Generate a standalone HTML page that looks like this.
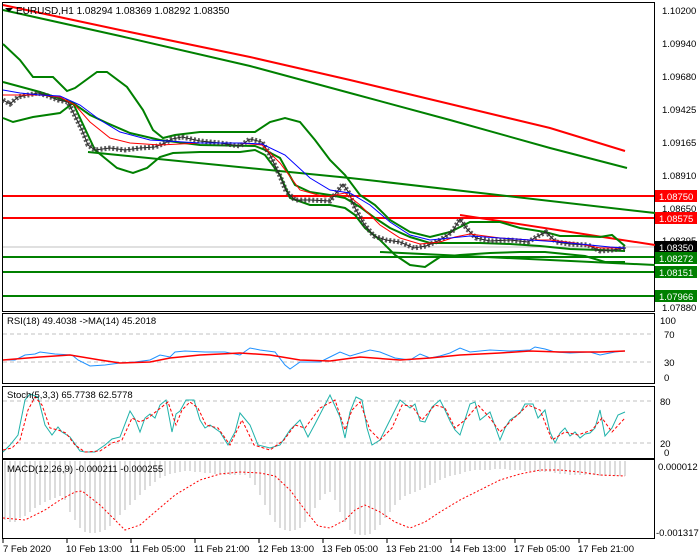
<!DOCTYPE html>
<html><head><meta charset="utf-8"><style>
html,body{margin:0;padding:0;background:#fff;}
svg{display:block;font-family:"Liberation Sans",sans-serif;}
</style></head><body>
<svg width="700" height="560" viewBox="0 0 700 560" xmlns="http://www.w3.org/2000/svg">
<rect width="700" height="560" fill="#fff"/>
<!-- main panel -->
<rect x="2.5" y="2.5" width="652" height="309" fill="none" stroke="#000"/>
<line x1="3" y1="247" x2="654" y2="247" stroke="#c0c0c0"/>
<!-- long MAs -->
<polyline points="3,5 120,30 250,57 350,80 450,104 550,128 625,151" fill="none" stroke="#f00" stroke-width="2"/>
<polyline points="3,10 120,36 250,66 350,93 450,120 550,148 627,168" fill="none" stroke="#008000" stroke-width="2"/>
<!-- horizontal levels -->
<line x1="3" y1="196" x2="654" y2="196" stroke="#f00" stroke-width="2"/>
<line x1="3" y1="218" x2="654" y2="218" stroke="#f00" stroke-width="2"/>
<line x1="3" y1="257" x2="654" y2="257" stroke="#008000" stroke-width="2"/>
<line x1="3" y1="272" x2="654" y2="272" stroke="#008000" stroke-width="2"/>
<line x1="3" y1="296" x2="654" y2="296" stroke="#008000" stroke-width="2"/>
<!-- trendlines -->
<polyline points="460,215 655,245" fill="none" stroke="#f00" stroke-width="2"/>
<polyline points="88,152 350,178 655,213" fill="none" stroke="#008000" stroke-width="2"/>
<polyline points="380,252 655,265" fill="none" stroke="#008000" stroke-width="2"/>
<!-- bollinger -->
<polyline points="3,44 20,60 33,77 53,77 67,91 75,88 97,72 107,72 127,87 143,110 153,130 163,138 175,135 200,132 255,132 270,122 285,118 300,122 315,140 330,160 345,175 360,195 375,205 390,220 410,232 430,237 450,232 470,222 500,222 520,228 545,232 560,236 580,236 600,237 612,235 625,246" fill="none" stroke="#008000" stroke-width="2"/>
<polyline points="3,118 13,122 33,117 60,113 73,103 87,133 95,150 117,168 133,173 147,168 160,157 173,153 200,152 240,152 255,150 265,155 280,175 290,198 310,205 330,205 345,208 355,215 365,228 380,240 395,255 410,265 425,267 440,257 460,255 490,253 520,252 545,252 565,254 585,256 605,262 625,262" fill="none" stroke="#008000" stroke-width="2"/>
<polyline points="3,82 40,92 73,103 90,115 107,123 130,133 160,140 200,145 255,146 265,150 280,158 295,185 310,192 330,195 345,198 360,207 375,218 390,228 410,237 430,243 450,243 480,243 510,244 540,246 570,249 600,250 625,251" fill="none" stroke="#008000" stroke-width="2"/>
<!-- price -->
<polyline points="3,100 10,104 18,97 28,95 38,93 48,96 58,100 68,102 75,116 82,130 88,145 95,150 110,148 125,150 140,148 155,147 165,143 172,139 182,137 200,141 220,143 240,146 250,139 262,142 270,155 280,176 286,191 295,200 310,200 330,201 343,184 349,193 355,208 364,224 374,236 386,240 400,242 414,248 426,246 440,240 452,232 460,219 467,229 476,238 490,241 510,240 528,242 538,236 546,232 556,242 570,244 588,245 600,251 612,250 626,248" fill="none" stroke="#222" stroke-width="1"/>
<polyline points="3,100 10,104 18,97 28,95 38,93 48,96 58,100 68,102 75,116 82,130 88,145 95,150 110,148 125,150 140,148 155,147 165,143 172,139 182,137 200,141 220,143 240,146 250,139 262,142 270,155 280,176 286,191 295,200 310,200 330,201 343,184 349,193 355,208 364,224 374,236 386,240 400,242 414,248 426,246 440,240 452,232 460,219 467,229 476,238 490,241 510,240 528,242 538,236 546,232 556,242 570,244 588,245 600,251 612,250 626,248" fill="none" stroke="#333" stroke-width="5" stroke-dasharray="2,2" opacity="0.8"/>
<polyline points="3,95 20,95 40,95 60,97 75,105 90,122 110,138 130,143 160,145 200,143 240,143 262,145 280,163 300,190 325,197 345,193 360,205 380,225 400,238 420,244 440,242 455,237 470,234 500,238 530,240 550,240 575,243 600,248 625,248" fill="none" stroke="#f00" stroke-width="1"/>
<polyline points="3,90 20,93 40,95 60,96 80,105 100,120 120,132 150,140 200,143 240,143 262,144 285,155 310,178 330,190 350,193 370,205 390,222 410,235 430,240 450,238 470,236 500,238 530,240 560,242 590,245 610,247 625,248" fill="none" stroke="#00f" stroke-width="1"/>
<text x="16" y="14" font-size="10" fill="#000">EURUSD,H1  1.08294 1.08369 1.08292 1.08350</text>
<polygon points="5,8 13,8 9,12" fill="#000"/>
<!-- right axis main -->
<g font-size="9.5" fill="#000">
<text x="662" y="14">1.10200</text>
<text x="662" y="47">1.09940</text>
<text x="662" y="80">1.09680</text>
<text x="662" y="113">1.09425</text>
<text x="662" y="146">1.09165</text>
<text x="662" y="179">1.08910</text>
<text x="662" y="212">1.08650</text>
<text x="662" y="244">1.08395</text>
<text x="662" y="311">1.07880</text>
</g>
<rect x="655" y="190" width="42" height="12" fill="#f00"/><text x="659" y="200" font-size="9.5" fill="#fff">1.08750</text>
<rect x="655" y="212" width="42" height="12" fill="#f00"/><text x="659" y="222" font-size="9.5" fill="#fff">1.08575</text>
<rect x="655" y="241" width="42" height="12" fill="#000"/><text x="659" y="251" font-size="9.5" fill="#fff">1.08350</text>
<rect x="655" y="252" width="42" height="12" fill="#008000"/><text x="659" y="262" font-size="9.5" fill="#fff">1.08272</text>
<rect x="655" y="266" width="42" height="12" fill="#008000"/><text x="659" y="276" font-size="9.5" fill="#fff">1.08151</text>
<rect x="655" y="290" width="42" height="12" fill="#008000"/><text x="659" y="300" font-size="9.5" fill="#fff">1.07966</text>
<!-- RSI -->
<rect x="2.5" y="313.5" width="652" height="70" fill="none" stroke="#000"/>
<line x1="3" y1="334" x2="654" y2="334" stroke="#c0c0c0" stroke-dasharray="4,3"/>
<line x1="3" y1="362" x2="654" y2="362" stroke="#c0c0c0" stroke-dasharray="4,3"/>
<polyline points="3,360 15,360 25,355 35,354 40,352 55,354 72,355 78,360 90,366 105,365 120,363 135,362 150,360 160,355 170,357 175,352 185,351 205,352 225,352 240,355 250,348 260,350 275,352 285,365 290,369 300,362 320,362 330,357 340,352 350,356 370,350 380,352 395,358 410,360 420,354 430,358 440,356 450,353 460,348 470,352 490,350 510,351 530,350 535,347 545,349 555,352 570,353 590,352 600,355 615,352 625,351" fill="none" stroke="#1e90ff" stroke-width="1"/>
<polyline points="3,360 40,357 70,355 100,360 120,363 150,362 170,358 200,355 240,353 270,355 300,360 330,361 360,357 400,360 430,358 460,355 500,353 530,351 560,352 600,352 625,351" fill="none" stroke="#f00" stroke-width="1.5"/>
<text x="7" y="324" font-size="9.5">RSI(18) 49.4038  -&gt;MA(14) 45.2018</text>
<g font-size="9.5"><text x="660" y="324">100</text><text x="664" y="338">70</text><text x="664" y="366">30</text><text x="664" y="381">0</text></g>
<!-- Stoch -->
<rect x="2.5" y="386.5" width="652" height="72" fill="none" stroke="#000"/>
<line x1="3" y1="401" x2="654" y2="401" stroke="#c0c0c0" stroke-dasharray="4,3"/>
<line x1="3" y1="443" x2="654" y2="443" stroke="#c0c0c0" stroke-dasharray="4,3"/>
<polyline points="3,452 10,445 18,435 25,400 30,394 38,397 45,425 52,435 58,427 62,432 70,437 80,451 85,452 95,452 105,445 112,439 120,437 130,411 135,419 140,432 145,418 150,414 155,418 160,405 166,400 172,432 176,414 180,411 186,400 194,400 200,420 205,428 210,425 220,432 228,445 235,432 240,413 250,425 258,445 270,448 280,445 290,430 300,420 308,437 315,424 330,395 340,417 345,438 350,412 356,397 362,400 367,428 372,445 380,440 390,420 400,400 410,408 415,404 420,421 425,422 432,407 440,400 445,410 450,421 455,430 460,435 470,404 475,402 480,420 490,412 500,440 505,428 510,420 520,413 525,404 533,404 538,418 545,410 550,432 555,443 560,433 565,428 570,436 575,432 580,438 585,434 590,433 595,428 600,410 605,436 612,428 618,415 625,412" fill="none" stroke="#20b2aa" stroke-width="1"/>
<polyline points="3,450 12,448 20,440 28,410 35,397 42,405 50,428 58,430 66,433 75,445 85,452 100,451 112,443 122,440 132,418 140,422 148,418 158,410 168,402 176,425 182,410 190,402 198,408 206,425 218,428 230,445 242,420 254,445 270,450 284,440 295,425 305,428 320,408 335,400 345,430 352,410 360,402 370,430 380,440 392,428 402,405 412,406 422,420 435,405 445,408 455,428 465,420 478,405 490,418 500,432 512,420 528,405 540,410 552,440 565,432 578,435 592,430 602,418 612,432 625,418" fill="none" stroke="#f00" stroke-width="1" stroke-dasharray="3,2"/>
<text x="7" y="398" font-size="9.5">Stoch(5,3,3) 65.7738 62.5778</text>
<g font-size="9.5"><text x="660" y="405">80</text><text x="660" y="447">20</text><text x="664" y="456">0</text></g>
<!-- MACD -->
<rect x="2.5" y="459.5" width="652" height="79" fill="none" stroke="#000"/>
<path d="M5 461V520 M10 461V522 M15 461V522 M20 461V518 M25 461V516 M30 461V512 M35 461V508 M40 461V505 M45 461V502 M50 461V500 M55 461V498 M60 461V496 M65 461V500 M70 461V512 M75 461V520 M80 461V528 M85 461V532 M90 461V533 M95 461V533 M100 461V532 M105 461V530 M110 461V526 M115 461V520 M120 461V515 M125 461V510 M130 461V505 M135 461V500 M140 461V495 M145 461V490 M150 461V486 M155 461V482 M160 461V478 M165 461V476 M170 461V474 M175 461V473 M180 461V472 M185 461V471 M190 461V471 M195 461V472 M200 461V472 M205 461V473 M210 461V473 M215 461V474 M220 461V474 M225 461V475 M230 461V475 M235 461V475 M240 461V475 M245 461V475 M250 461V478 M255 461V485 M260 461V495 M265 461V505 M270 461V515 M275 461V522 M280 461V528 M285 461V530 M290 461V531 M295 461V530 M300 461V528 M305 461V522 M310 461V515 M315 461V508 M320 461V500 M325 461V494 M330 461V492 M335 461V500 M340 461V512 M345 461V522 M350 461V530 M355 461V534 M360 461V535 M365 461V535 M370 461V534 M375 461V530 M380 461V525 M385 461V518 M390 461V512 M395 461V505 M400 461V500 M405 461V496 M410 461V494 M415 461V492 M420 461V490 M425 461V488 M430 461V485 M435 461V483 M440 461V480 M445 461V478 M450 461V476 M455 461V475 M460 461V474 M465 461V472 M470 461V471 M475 461V470 M480 461V470 M485 461V470 M490 461V470 M495 461V469 M500 461V469 M505 461V469 M510 461V470 M515 461V470 M520 461V470 M525 461V471 M530 461V471 M535 461V472 M540 461V472 M545 461V472 M550 461V472 M555 461V473 M560 461V474 M565 461V474 M570 461V475 M575 461V475 M580 461V475 M585 461V475 M590 461V475 M595 461V475 M600 461V476 M605 461V476 M610 461V476 M615 461V476 M620 461V476 M625 461V476" stroke="#b8b8b8" stroke-width="1" fill="none"/>
<polyline points="3,518 25,520 45,510 60,500 75,492 82,491 100,505 115,520 125,530 140,525 155,512 175,495 200,480 220,474 240,472 260,473 275,476 290,490 305,510 318,526 330,528 345,520 355,510 365,505 380,512 395,522 410,528 425,522 440,512 460,500 480,490 500,480 520,474 540,470 560,470 580,472 600,475 625,476" fill="none" stroke="#f00" stroke-width="1" stroke-dasharray="2,2"/>
<text x="7" y="472" font-size="9.5">MACD(12,26,9) -0.000211 -0.000255</text>
<g font-size="9.5"><text x="658" y="470">0.000012</text><text x="656" y="536">-0.001317</text></g>
<!-- time axis -->
<g stroke="#000"><line x1="3" y1="539" x2="3" y2="543"/><line x1="67" y1="539" x2="67" y2="543"/><line x1="131" y1="539" x2="131" y2="543"/><line x1="195" y1="539" x2="195" y2="543"/><line x1="259" y1="539" x2="259" y2="543"/><line x1="323" y1="539" x2="323" y2="543"/><line x1="387" y1="539" x2="387" y2="543"/><line x1="451" y1="539" x2="451" y2="543"/><line x1="515" y1="539" x2="515" y2="543"/><line x1="579" y1="539" x2="579" y2="543"/></g>
<g font-size="9.5"><text x="3" y="552">7 Feb 2020</text><text x="66" y="552">10 Feb 13:00</text><text x="130" y="552">11 Feb 05:00</text><text x="194" y="552">11 Feb 21:00</text><text x="258" y="552">12 Feb 13:00</text><text x="322" y="552">13 Feb 05:00</text><text x="386" y="552">13 Feb 21:00</text><text x="450" y="552">14 Feb 13:00</text><text x="514" y="552">17 Feb 05:00</text><text x="578" y="552">17 Feb 21:00</text></g>
</svg>
</body></html>
